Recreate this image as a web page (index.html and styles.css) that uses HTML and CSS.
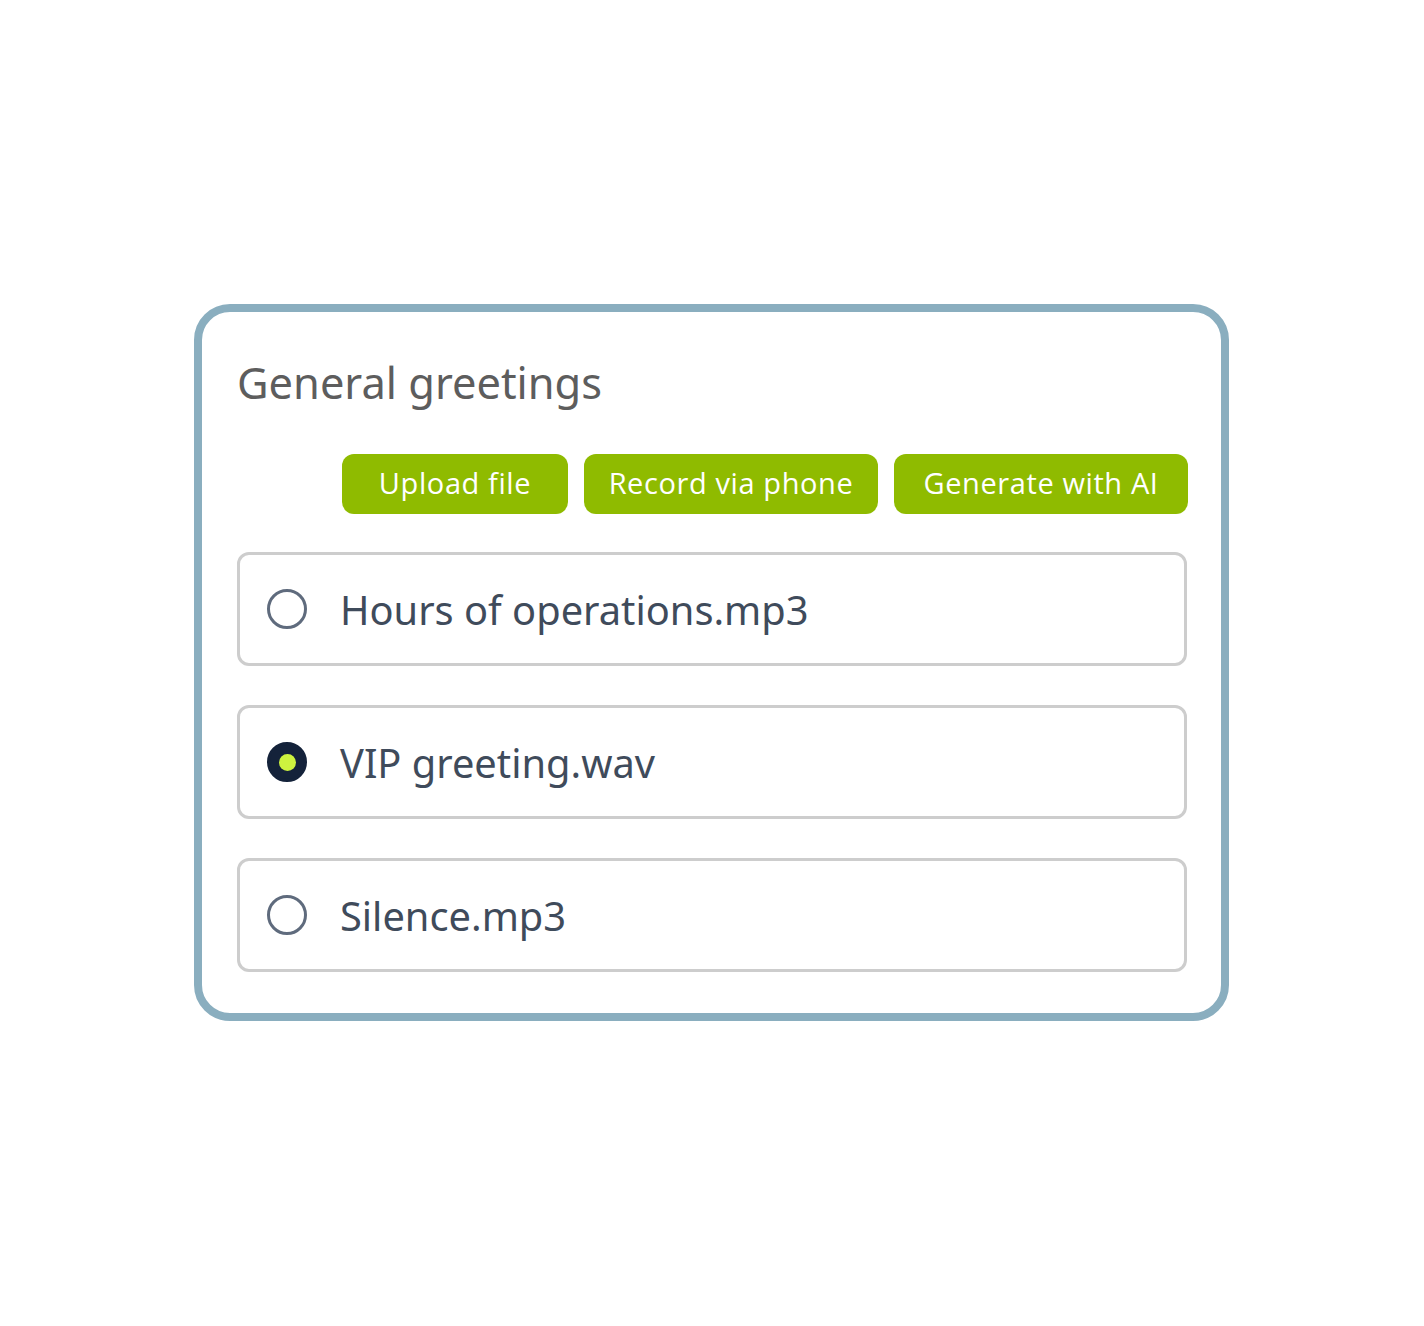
FILE: index.html
```html
<!DOCTYPE html>
<html>
<head>
	<title>General greetings</title>
	<meta charset="utf-8">
	<link rel="stylesheet" href="styles.css">
</head>
<body>
	<div class="page">
		<div class="card">
			<h2 class="title">General greetings</h2>
			<div class="actions">
				<button class="btn btn-upload">Upload file</button>
				<button class="btn btn-wide">Record via phone</button>
				<button class="btn btn-wide">Generate with AI</button>
			</div>
			<ul class="list">
				<li class="item">
					<span class="radio"></span>
					<span class="name">Hours of operations.mp3</span>
				</li>
				<li class="item">
					<span class="radio checked"></span>
					<span class="name">VIP greeting.wav</span>
				</li>
				<li class="item">
					<span class="radio"></span>
					<span class="name">Silence.mp3</span>
				</li>
			</ul>
		</div>
	</div>
</body>
</html>
```

FILE: styles.css
```css
*{
	margin:0;
	padding:0;
	box-sizing: border-box;
}
body{
	background: #fff;
	font-family: "Noto Sans", "Open Sans", sans-serif;
}
.page{
	height:1326px;
	padding: 304px 0 0 194px;
}
.card{
	width:1035px;
	height:717px;
	border: 8px solid #8aaebf;
	border-radius: 36px;
	padding: 41px 34px 41px 35px;
	display: flex;
	flex-direction: column;
}
.title{
	font-size: 43.4px;
	line-height: 60px;
	font-weight: 400;
	color: #5d5d5d;
}
.actions{
	display: flex;
	justify-content: flex-end;
	gap: 16px;
	margin-top: 41px;
	margin-right: -1px;
}
.btn{
	height: 60px;
	padding-bottom: 3px;
	border: none;
	border-radius: 12px;
	background: #8fbb00;
	color: #fff;
	font-family: "Open Sans", sans-serif;
	font-size: 29px;
	letter-spacing: 0.6px;
	cursor: pointer;
}
.btn-upload{
	width: 226px;
}
.btn-wide{
	width: 294px;
}
.list{
	list-style: none;
	margin-top: 38px;
	display: flex;
	flex-direction: column;
	gap: 39px;
}
.item{
	height: 114px;
	border: 3px solid #cdcdcd;
	border-radius: 12px;
	display: flex;
	align-items: center;
	padding-left: 27px;
}
.radio{
	width: 40px;
	height: 40px;
	border: 3px solid #5f6b7d;
	border-radius: 50%;
	display: flex;
	align-items: center;
	justify-content: center;
	flex-shrink: 0;
}
.radio.checked{
	background: #14223a;
	border-color: #14223a;
}
.radio.checked::after{
	content: "";
	width: 17px;
	height: 17px;
	border-radius: 50%;
	background: #cdf33f;
}
.name{
	margin-left: 33px;
	font-size: 39.8px;
	color: #3f4b5b;
}
```
